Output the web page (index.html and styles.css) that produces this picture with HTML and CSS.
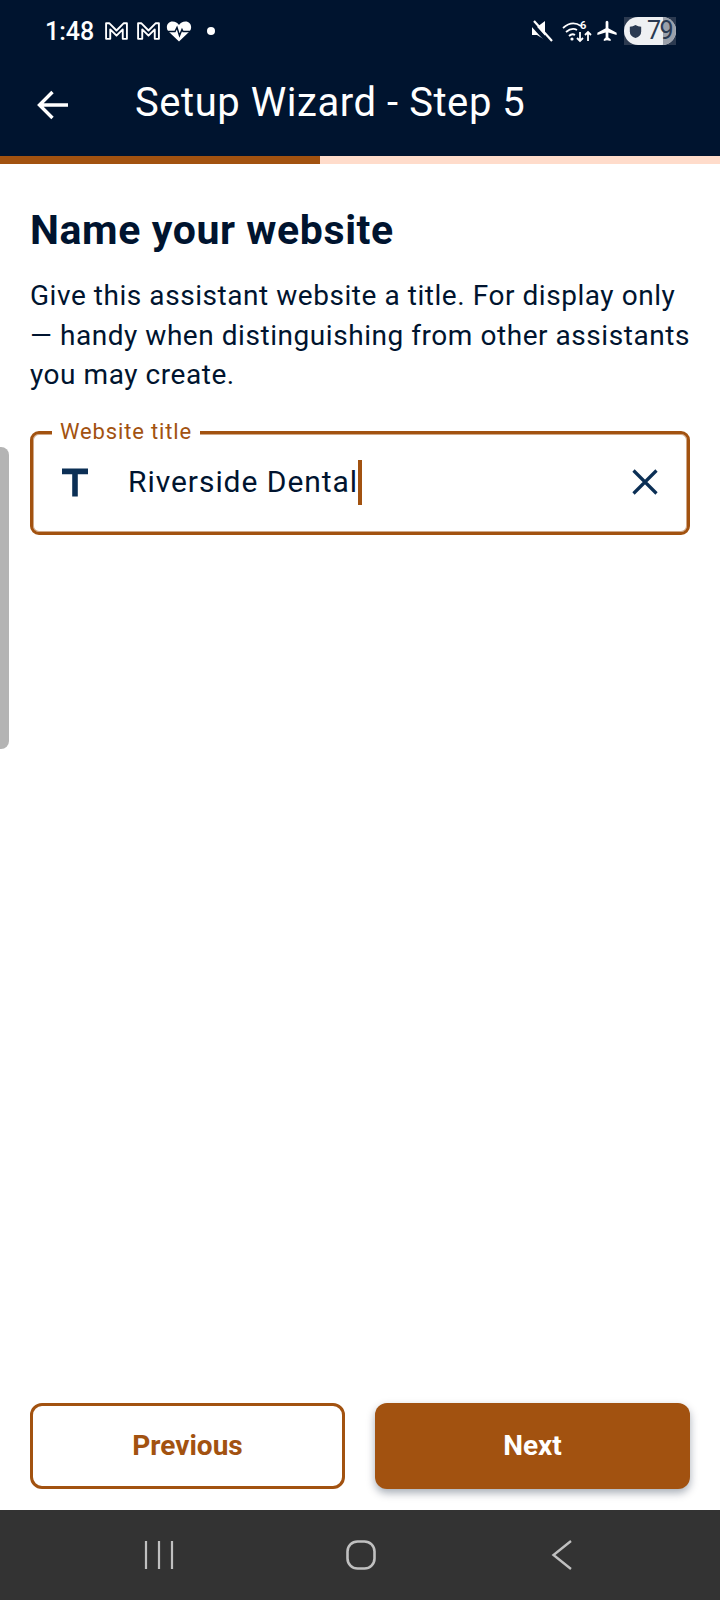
FILE: index.html
```html
<!DOCTYPE html>
<html lang="en">
<head>
<meta charset="utf-8">
<title>Setup Wizard - Step 5</title>
<link rel="stylesheet" href="styles.css">
</head>
<body>
<div class="page">
  <header class="top">
    <div class="status">
      <div class="status-left">
        <span class="time">1:48</span>
        <svg class="ic-m" viewBox="0 1 24 19"><path d="M2 18V3h3l7 7 7-7h3v15h-4V9l-6 6-6-6v9z" fill="none" stroke="#fff" stroke-width="1.800" stroke-linejoin="round"/></svg>
        <svg class="ic-m" viewBox="0 1 24 19"><path d="M2 18V3h3l7 7 7-7h3v15h-4V9l-6 6-6-6v9z" fill="none" stroke="#fff" stroke-width="1.800" stroke-linejoin="round"/></svg>
        <svg class="ic-heart" viewBox="0 0 26 22"><path d="M13 21 2.500 11C-1 7 1.500 1 6.500 1 9.500 1 11.500 2.500 13 4.500 14.500 2.500 16.500 1 19.500 1 24.500 1 27 7 23.500 11z" fill="#fff"/><path d="M1 11h8l2-4 2.500 8 2.500-6 1 2h8" fill="none" stroke="#00142f" stroke-width="1.500"/></svg>
        <span class="dot"></span>
      </div>
      <div class="status-right">
        <svg class="ic-mute" viewBox="0 0 22 22"><path d="M1 7h5l8-6v19l-8-5H1z" fill="#fff"/><path d="M0 3l18 20" stroke="#00142f" stroke-width="4"/><path d="M3 1l18 20" stroke="#fff" stroke-width="2.200"/></svg>
        <svg class="ic-wifi" viewBox="0 0 30 24"><path d="M1 9q9-8 18-2M4 13q6-5 11-2M7 17q3-3 6-1" fill="none" stroke="#fff" stroke-width="1.800"/><circle cx="10" cy="20" r="1.600" fill="#fff"/><path d="M18 13v9M15 19l3 3 3-3M26 22v-9M23 16l3-3 3 3" fill="none" stroke="#fff" stroke-width="1.800"/><text x="18" y="10" class="wifi-six">6</text></svg>
        <svg class="ic-plane" viewBox="0 0 24 24"><path d="M10.500 2.500c0-1 .7-1.800 1.500-1.800s1.500.8 1.500 1.800V9l9 5v2.300l-9-2.800v5.700l2.500 1.800V23L12 22l-3.500 1v-2l2-1.800v-5.700l-9 2.800V14l9-5z" fill="#fff"/></svg>
        <div class="battery">
          <div class="battery-pill">
            <svg class="ic-shield" viewBox="0 0 16 18"><path d="M1 3q4 0 7-2 3 2 7 2v6q0 6-7 8-7-2-7-8z" fill="#2a3a52"/></svg>
            <span class="battery-num">79</span>
            <span class="battery-rest"></span>
          </div>
        </div>
      </div>
    </div>
    <div class="appbar">
      <svg class="ic-back" viewBox="0 0 32 32"><path d="M31 16H3M15.500 3 2.500 16l13 13" fill="none" stroke="#fff" stroke-width="3.400"/></svg>
      <h1 class="appbar-title">Setup Wizard - Step 5</h1>
    </div>
  </header>
  <div class="progress"><div class="progress-fill"></div></div>
  <main class="content">
    <h2 class="heading">Name your website</h2>
    <p class="lead">Give this assistant website a title. For display only — handy when distinguishing from other assistants you may create.</p>
    <div class="field">
      <span class="field-label">Website title</span>
      <svg class="ic-title" viewBox="5 4 14 15"><path d="M5 4v3h5.500v12h3V7H19V4z" fill="#0b2f55"/></svg>
      <span class="field-value">Riverside Dental</span><span class="caret"></span>
      <svg class="ic-clear" viewBox="0 0 26 26"><path d="M1.500 1.500l23 23M24.500 1.500l-23 23" stroke="#0b2f55" stroke-width="3.200"/></svg>
    </div>
  </main>
  <div class="actions">
    <button class="btn btn-outline">Previous</button>
    <button class="btn btn-solid">Next</button>
  </div>
  <nav class="navbar">
    <svg class="ic-nav" viewBox="0 0 30 30"><path d="M2 1v28M15 1v28M28 1v28" stroke="#c0c0c0" stroke-width="2.200" fill="none"/></svg>
    <svg class="ic-nav" viewBox="0 0 30 30"><rect x="1.500" y="1.500" width="27" height="27" rx="10" stroke="#c0c0c0" stroke-width="2.600" fill="none"/></svg>
    <svg class="ic-nav" viewBox="0 0 30 30"><path d="M24 1 6.500 15 24 29" stroke="#c0c0c0" stroke-width="2.400" fill="none"/></svg>
  </nav>
  <div class="edge-handle"></div>
</div>
</body>
</html>
```

FILE: styles.css
```css
* { box-sizing: border-box; }
html, body { margin: 0; padding: 0; }
body { font-family: Roboto, "Liberation Sans", sans-serif; background: #fff; color: #00142f; }
.page { position: relative; width: 720px; height: 1600px; display: flex; flex-direction: column; overflow: hidden; }

.top { height: 156px; background: #00142f; color: #fff; flex: none; }
.status { height: 62px; display: flex; justify-content: space-between; align-items: center; padding: 0 44px 0 45px; }
.status-left, .status-right { display: flex; align-items: center; }
.time { font-size: 25px; font-weight: 500; margin-right: 10px; }
.ic-m { width: 25px; height: 20px; margin-right: 7px; }
.ic-heart { width: 26px; height: 23px; margin-left: -2px; }
.dot { width: 8px; height: 8px; border-radius: 50%; background: #fff; margin-left: 15px; }
.ic-mute { width: 22px; height: 22px; margin-right: 9px; }
.ic-wifi { width: 30px; height: 24px; margin-right: 4px; }
.wifi-six { font: 700 11px Roboto, sans-serif; fill: #fff; }
.ic-plane { width: 22px; height: 22px; margin-right: 6px; }
.battery { width: 52px; height: 28px; background: #2c3a50; display: flex; }
.battery-pill { position: relative; flex: 1; border-radius: 14px; background: #eef0f3; display: flex; align-items: center; padding-left: 5px; overflow: hidden; }
.ic-shield { width: 13px; height: 15px; margin-right: 5px; flex: none; }
.battery-num { position: relative; z-index: 1; font-size: 25px; color: #2a3a52; line-height: 28px; letter-spacing: -1.500px; }
.battery-rest { position: absolute; top: 0; right: 0; bottom: 0; width: 13px; background: #9aa0aa; }

.appbar { height: 94px; display: flex; align-items: center; padding: 0 0 12px 37px; }
.ic-back { width: 32px; height: 32px; flex: none; margin-top: 3px; }
.appbar-title { margin: 0 0 0 66px; font-size: 40px; font-weight: 400; letter-spacing: 0.550px; line-height: 48px; }

.progress { height: 8px; background: #ffdccb; flex: none; }
.progress-fill { width: 320px; height: 100%; background: #a25210; }

.content { flex: 1; padding: 42px 30px 0; }
.heading { margin: 0; font-size: 41px; font-weight: 700; line-height: 48px; letter-spacing: 0.600px; }
.lead { margin: 22px 0 0; font-size: 28px; line-height: 39.500px; letter-spacing: 0.550px; }

.field { position: relative; margin-top: 36px; height: 104px; border: 3px solid #a25210; box-shadow: inset 0 0 0 1px rgba(162, 82, 16, 0.5); border-radius: 9px; display: flex; align-items: center; padding: 0 29px; }
.field-label { position: absolute; top: -15px; left: 19px; padding: 0 8px; background: #fff; color: #a25210; font-size: 22px; line-height: 26px; letter-spacing: 0.850px; }
.ic-title { width: 26px; height: 29px; flex: none; margin-right: 40px; }
.field-value { font-size: 30px; letter-spacing: 0.950px; margin-bottom: 3px; }
.caret { width: 4px; height: 45px; background: #a25210; }
.ic-clear { width: 26px; height: 26px; margin-left: auto; margin-bottom: 1px; }

.actions { flex: none; height: 122px; padding: 15px 30px 0; display: grid; grid-template-columns: 1fr 1fr; gap: 30px; }
.btn { height: 86px; border-radius: 12px; font-family: Roboto, sans-serif; font-size: 28px; font-weight: 700; padding: 0 0 2px; }
.btn-outline { background: #fff; color: #a25210; border: 3px solid #a25210; }
.btn-solid { background: #a25210; color: #fff; border: 0; box-shadow: 0 4px 8px rgba(0, 20, 47, 0.35); }

.navbar { flex: none; height: 90px; background: #333; display: flex; justify-content: space-between; align-items: center; padding: 0 143px 0 144px; }
.ic-nav { width: 30px; height: 30px; }

.edge-handle { position: absolute; left: 0; top: 447px; width: 9px; height: 302px; background: #b4b4b4; border-radius: 0 8px 8px 0; }
```
